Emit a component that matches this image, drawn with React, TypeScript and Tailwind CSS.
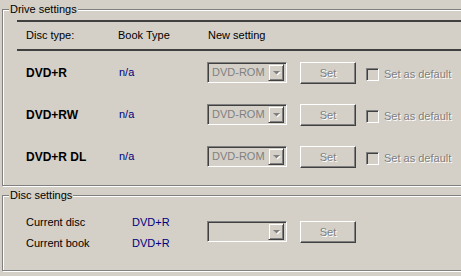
import React from "react";

const sunken =
  "border border-t-[#808080] border-l-[#808080] border-b-white border-r-white shadow-[inset_1px_1px_#404040,inset_-1px_-1px_#d4d0c8]";
const raised =
  "border border-t-white border-l-white border-b-[#404040] border-r-[#404040] shadow-[inset_-1px_-1px_#808080,inset_1px_1px_#d4d0c8]";
const disabledText = "text-[#808080] [text-shadow:1px_1px_0_#fff]";

function Arrow() {
  return (
    <svg width="9" height="6" viewBox="0 0 9 6">
      <polygon points="2,2 9,2 5.5,5.5" fill="#fff" />
      <polygon points="1,1 8,1 4.5,4.5" fill="#808080" />
    </svg>
  );
}

function Combo({ value }: { value?: string }) {
  return (
    <div className={`flex h-[21px] w-[80px] items-center p-[2px] ${sunken}`}>
      <span className="flex-1 pl-[2px] text-[11px] leading-[13px] text-[#808080]">
        {value}
      </span>
      <div className="flex h-[17px] w-[16px] items-center justify-center border border-t-[#d4d0c8] border-l-[#d4d0c8] border-b-[#404040] border-r-[#404040] shadow-[inset_1px_1px_#fff,inset_-1px_-1px_#808080]">
        <Arrow />
      </div>
    </div>
  );
}

function SetButton() {
  return (
    <div
      className={`ml-[13px] flex h-[22px] w-[56px] items-center justify-center text-[11px] ${raised} ${disabledText}`}
    >
      Set
    </div>
  );
}

function Group({
  title,
  className,
  children,
}: {
  title: string;
  className: string;
  children: React.ReactNode;
}) {
  return (
    <div
      className={`relative ml-[2px] w-[480px] border border-[#808080] shadow-[1px_1px_0_#fff,inset_1px_1px_0_#fff] ${className}`}
    >
      <span className="absolute left-[6px] top-[-7px] bg-[#d4d0c8] px-[1px] text-[11px] leading-[13px] text-black">
        {title}
      </span>
      {children}
    </div>
  );
}

const drives = ["DVD+R", "DVD+RW", "DVD+R DL"];

export default function App() {
  return (
    <div className="h-[276px] w-[461px] overflow-hidden bg-[#d4d0c8] font-['Liberation_Sans',Arial,sans-serif] text-black">
      <Group title="Drive settings" className="mt-[9px] h-[177px]">
        <div className="pl-[14px] pt-[10px]">
          <div className="h-[2px] bg-[#404040]" />
          <div className="flex h-[27px] items-center pl-[9px] text-[11px]">
            <span className="w-[92px]">Disc type:</span>
            <span className="w-[90px]">Book Type</span>
            <span>New setting</span>
          </div>
          <div className="h-[2px] bg-[#404040]" />
          <div className="flex flex-col gap-[20px] pl-[9px] pt-[11px]">
            {drives.map((d) => (
              <div key={d} className="flex h-[22px] items-start">
                <span className="flex h-[21px] w-[93px] items-center text-[12px] font-bold">
                  {d}
                </span>
                <span className="flex h-[21px] w-[88px] items-center text-[11px] text-[#000080]">
                  n/a
                </span>
                <Combo value="DVD-ROM" />
                <SetButton />
                <div className="ml-[10px] mt-[6px] flex h-[13px] items-center">
                  <div className={`h-[13px] w-[13px] ${sunken}`} />
                  <span className={`ml-[5px] text-[11px] ${disabledText}`}>
                    Set as default
                  </span>
                </div>
              </div>
            ))}
          </div>
        </div>
      </Group>
      <Group title="Disc settings" className="mt-[9px] h-[76px]">
        <div className="flex pl-[23px] pt-[16px] text-[11px]">
          <div className="flex w-[106px] flex-col">
            <span className="flex h-[21px] items-center">Current disc</span>
            <span className="flex h-[21px] items-center">Current book</span>
          </div>
          <div className="flex w-[75px] flex-col text-[#000080]">
            <span className="flex h-[21px] items-center">DVD+R</span>
            <span className="flex h-[21px] items-center">DVD+R</span>
          </div>
          <div className="mt-[9px] flex items-start">
            <Combo />
            <SetButton />
          </div>
        </div>
      </Group>
    </div>
  );
}
